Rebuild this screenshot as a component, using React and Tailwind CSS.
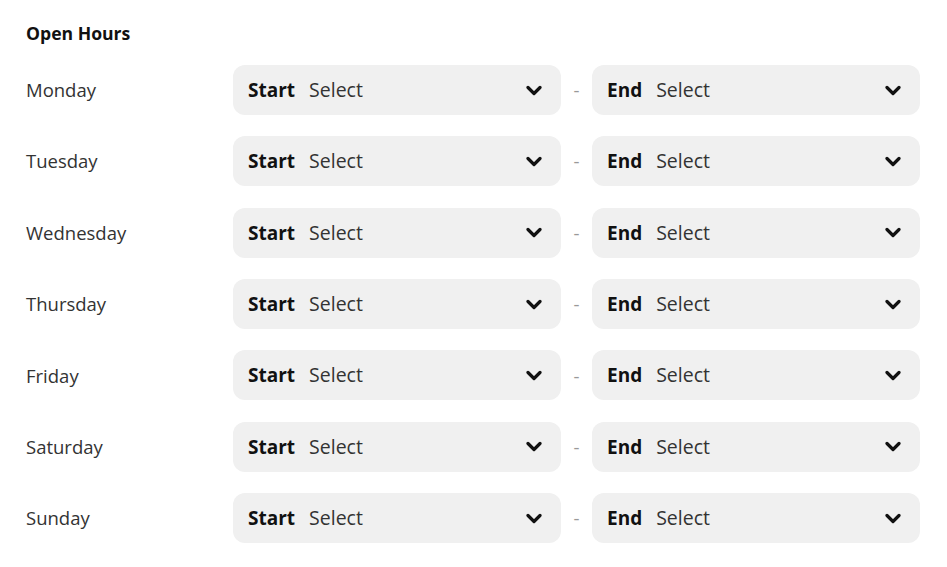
import React from "react";

const days = ["Monday", "Tuesday", "Wednesday", "Thursday", "Friday", "Saturday", "Sunday"];

function Chevron() {
  return (
    <svg width="16" height="11" viewBox="0 0 16 11" className="shrink-0">
      <path d="M2 2.5 L8 8.5 L14 2.5" fill="none" stroke="#111" strokeWidth="3.2" strokeLinecap="round" strokeLinejoin="round" />
    </svg>
  );
}

function SelectBox({ label, width }) {
  return (
    <div className={`flex h-[50px] items-center rounded-xl bg-[#f0f0f0] pl-[15px] pr-[19px] ${width}`}>
      <div className="flex items-baseline leading-[28px]">
        <span className="text-[19px] font-bold text-[#111]">{label}</span>
        <span className="ml-[14px] text-[19.5px] text-[#333]">Select</span>
      </div>
      <span className="ml-auto"><Chevron /></span>
    </div>
  );
}

export default function App() {
  return (
    <div className="min-h-[567px] bg-white px-[26px] pt-[21px] text-[18.5px] text-[#222]" style={{ fontFamily: '"Open Sans", sans-serif' }}>
      <h2 className="text-[17.6px] font-bold leading-[24px] text-[#111]">Open Hours</h2>
      <div className="mt-[20px] flex flex-col gap-[21.35px]">
        {days.map((d) => (
          <div key={d} className="flex items-center">
            <div className="w-[207px] text-[#333]">{d}</div>
            <SelectBox label="Start" width="w-[328px]" />
            <div className="w-[31px] text-center text-[#999]">-</div>
            <SelectBox label="End" width="w-[328px]" />
          </div>
        ))}
      </div>
    </div>
  );
}
